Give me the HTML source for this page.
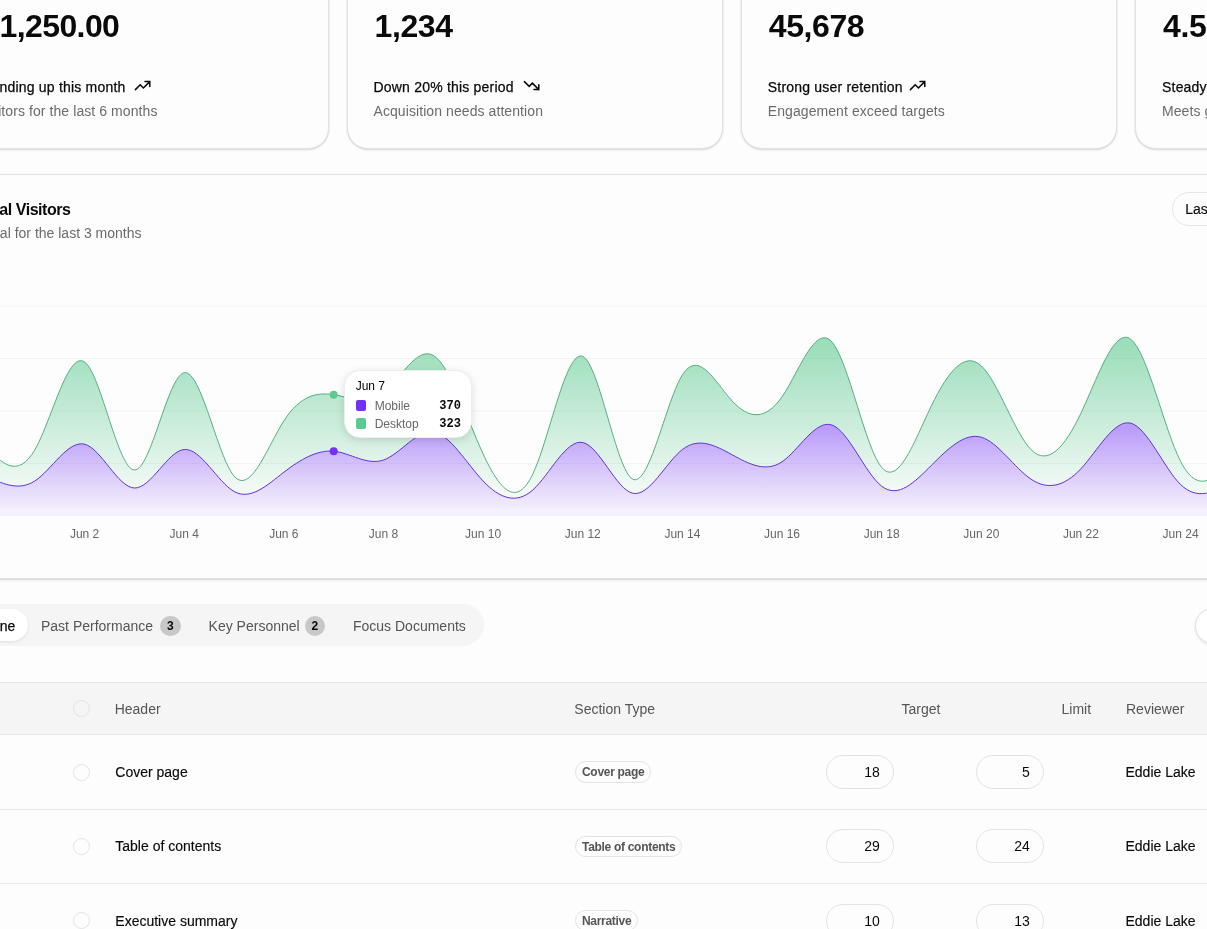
<!DOCTYPE html>
<html><head><meta charset="utf-8"><style>
*{box-sizing:border-box;margin:0;padding:0}
html,body{width:1207px;will-change:transform;height:929px;overflow:hidden;background:#fdfdfd;font-family:"Liberation Sans",sans-serif;color:#0a0a0a;position:relative}
body>div,body>i,body>svg{position:absolute;white-space:nowrap}
.card{top:-60px;width:376.5px;height:208.7px;border:1px solid #e2e2e6;border-radius:21px;background:#fdfdfd;box-shadow:0 1px 2px rgba(0,0,0,.15),0 0 2px rgba(0,0,0,.04)}
.num{top:8.1px;font-size:32px;font-weight:700;line-height:36px;letter-spacing:-.4px}
.l1{top:79px;font-size:14px;line-height:16px;letter-spacing:.2px;-webkit-text-stroke:.25px #0a0a0a}
.l2{top:102.8px;font-size:14px;line-height:16px;color:#6b6b6b;letter-spacing:.08px}
.ic{position:absolute}
.chartcard{left:-200px;top:174px;width:1600px;height:405px;border:1px solid #e2e2e6;border-radius:21px;background:#fdfdfd;box-shadow:0 1px 2px rgba(0,0,0,.15),0 0 2px rgba(0,0,0,.04)}
.ct{top:201.2px;font-size:16px;font-weight:700;line-height:18px;letter-spacing:-.45px}
.cd{top:225px;font-size:14px;line-height:16px;color:#6b6b6b}
.btn3{left:1172.3px;top:192.3px;width:140px;height:33.5px;border:1px solid #e6e6e6;border-radius:17px;background:#fdfdfd;font-size:14px;line-height:16px;padding:8px 0 0 12px;-webkit-text-stroke:.15px #0a0a0a}
.xl{top:527px;width:80px;text-align:center;font-size:12px;line-height:14px;color:#666}
.tip{left:343.7px;top:369.9px;width:128.2px;height:68.4px;background:#fff;border:1px solid #ededed;border-radius:16px;box-shadow:0 2px 8px rgba(0,0,0,.13)}
.tip div,.tip i{position:absolute}
.tip .t{left:11px;top:8px;font-size:12px;font-weight:400;line-height:14px;color:#000}
.tip .sw{left:11px;width:10px;height:10.5px;border-radius:2px}
.tip .nm{left:30px;font-size:12px;line-height:14px;color:#666}
.tip .vl{right:10px;font-family:"Liberation Mono",monospace;font-size:12px;line-height:14px;font-weight:700}
.tabs{left:-60px;top:603.8px;width:544px;height:42.3px;border-radius:21px;background:#f5f5f5}
.tabact{left:-60px;top:609.1px;width:88px;height:32.3px;border-radius:16px;background:#fff;box-shadow:0 1px 3px rgba(0,0,0,.1)}
.tabact span{position:absolute;right:12.8px;top:9px;font-size:14px;line-height:16px;color:#0a0a0a;-webkit-text-stroke:.25px #0a0a0a}
.tab{top:618px;font-size:14px;line-height:16px;color:#555}
.cnt{top:616px;width:20.7px;height:19.7px;border-radius:10px;background:#c8c8c8;font-size:12px;line-height:20px;text-align:center;color:#0a0a0a;font-weight:700}
.rbtn{left:1195px;top:607.8px;width:60px;height:35.8px;border-radius:18px;background:#fff;border:1px solid #e2e2e2;box-shadow:0 1px 3px rgba(0,0,0,.1)}
.thead{left:0;top:682px;width:1207px;height:53px;background:#f5f5f5;border-top:1px solid #e4e4e9;border-bottom:1px solid #e4e4e9}
.th{top:701px;font-size:14px;line-height:16px;color:#555}
.chk{left:72.9px;width:17px;height:17px;border-radius:9px;border:1px solid #e3e3e6}
.hl{left:0;width:1207px;height:1px;background:#e6e6eb}
.cell{font-size:14px;line-height:16px;-webkit-text-stroke:.15px #0a0a0a}
.badge{left:574.5px;height:21.5px;border:1px solid #e3e3e3;border-radius:11px;padding:1px 6px 0 6.5px;font-size:12px;line-height:19px;font-weight:700;color:#555;letter-spacing:-.3px}
.inp{width:68px;height:34px;border:1px solid #e3e3e3;border-radius:17px;font-size:14px;line-height:32px;text-align:right;padding-right:12.8px}
.r{text-align:right}
</style></head><body>
<div class="card" style="left:-47.75px"></div>
<div class="num r" style="right:1087.7px;letter-spacing:-.6px">$1,250.00</div><div class="l1 r" style="right:1081.5px">Trending up this month</div><div class="l2 r" style="right:1049.5px">Visitors for the last 6 months</div><svg class="ic" style="left:132.6px;top:75.50000000000001px" width="19.2" height="19.2" viewBox="0 0 24 24" fill="none" stroke="#0a0a0a" stroke-width="1.9" stroke-linecap="round" stroke-linejoin="miter"><path d="M3 17l6-6 4 4 8-8M15 7h6v6"/></svg>
<div class="card" style="left:346.5px"></div>
<div class="num" style="left:374.5px">1,234</div><div class="l1" style="left:373.5px">Down 20% this period</div><div class="l2" style="left:373.5px">Acquisition needs attention</div><svg class="ic" style="left:521.6px;top:75.50000000000001px" width="19.2" height="19.2" viewBox="0 0 24 24" fill="none" stroke="#0a0a0a" stroke-width="1.9" stroke-linecap="round" stroke-linejoin="miter"><path d="M3 7l6 6 4-4 8 8M21 11v6h-6"/></svg>
<div class="card" style="left:740.75px"></div>
<div class="num" style="left:768.75px">45,678</div><div class="l1" style="left:767.75px">Strong user retention</div><div class="l2" style="left:767.75px">Engagement exceed targets</div><svg class="ic" style="left:907.6px;top:75.50000000000001px" width="19.2" height="19.2" viewBox="0 0 24 24" fill="none" stroke="#0a0a0a" stroke-width="1.9" stroke-linecap="round" stroke-linejoin="miter"><path d="M3 17l6-6 4 4 8-8M15 7h6v6"/></svg>
<div class="card" style="left:1135.0px"></div>
<div class="num" style="left:1163.0px">4.5%</div><div class="l1" style="left:1162.0px">Steady performance increase</div><div class="l2" style="left:1162.0px">Meets growth projections</div><svg class="ic" style="left:1397.6px;top:75.50000000000001px" width="19.2" height="19.2" viewBox="0 0 24 24" fill="none" stroke="#0a0a0a" stroke-width="1.9" stroke-linecap="round" stroke-linejoin="miter"><path d="M3 17l6-6 4 4 8-8M15 7h6v6"/></svg>

<div class="chartcard"></div>
<div class="ct r" style="right:1136.5px">Total Visitors</div>
<div class="cd r" style="right:1065.5px">Total for the last 3 months</div>
<div class="btn3">Last 3 months</div>
<svg class="chart" style="left:0;top:0" width="1207" height="929">
<defs>
<linearGradient id="gd" gradientUnits="userSpaceOnUse" x1="0" y1="337.3" x2="0" y2="500.2">
<stop offset="5%" stop-color="#5cc98f" stop-opacity="1"/><stop offset="95%" stop-color="#5cc98f" stop-opacity=".1"/></linearGradient>
<linearGradient id="gm" gradientUnits="userSpaceOnUse" x1="0" y1="422.8" x2="0" y2="516">
<stop offset="5%" stop-color="#7132f5" stop-opacity=".8"/><stop offset="95%" stop-color="#7132f5" stop-opacity=".1"/></linearGradient>
</defs>
<g stroke="#f3f3f3" stroke-width="1">
<line x1="0" x2="1207" y1="306" y2="306"/><line x1="0" x2="1207" y1="358.5" y2="358.5"/><line x1="0" x2="1207" y1="411" y2="411"/><line x1="0" x2="1207" y1="463.5" y2="463.5"/>
</g>
<path d="M-164.5,482.8C-147.9,499.6,-131.3,500.3,-114.6,493.2C-98,486.2,-81.4,471.4,-64.8,467C-48.2,462.6,-31.6,468.4,-15,475.8C1.6,483.1,18.2,491.8,34.8,481C51.4,470.2,68,440,84.6,444.2C101.2,448.5,117.8,487.4,134.4,488C151,488.6,167.6,451.1,184.2,449.5C200.9,447.9,217.5,482.2,234.1,491.5C250.7,500.8,267.3,485,283.9,472.2C300.5,459.5,317.1,449.7,333.7,451.2C350.3,452.8,366.9,465.8,383.5,460C400.1,454.2,416.7,429.7,433.3,432C449.9,434.3,466.5,463.4,483.1,481C499.7,498.6,516.4,504.7,533,489.8C549.6,474.8,566.2,438.9,582.8,442.5C599.4,446.1,616,489.2,632.6,493.2C649.2,497.3,665.8,462.4,682.4,449.5C699,436.6,715.6,445.7,732.2,454.8C748.8,463.8,765.4,472.9,782,461.8C798.6,450.6,815.3,419.3,831.9,425C848.5,430.7,865.1,473.4,881.7,486.2C898.3,499.1,914.9,481.9,931.5,465.2C948.1,448.6,964.7,432.4,981.3,437.2C997.9,442.1,1014.5,468.1,1031.1,479.2C1047.7,490.4,1064.3,486.6,1080.9,468.8C1097.5,450.9,1114.1,418.9,1130.8,423.2C1147.4,427.6,1164,468.3,1180.6,484.5C1197.2,500.7,1213.8,492.4,1230.4,482.8C1247,473.1,1263.6,462,1280.2,449.5C1296.8,437,1313.4,422.9,1330,430.2L1330,516L-164.5,516Z" fill="url(#gm)" fill-opacity=".6" stroke="none"/>
<path d="M-164.5,442C-147.9,476.4,-131.3,494.3,-114.6,479.6C-98,464.9,-81.4,417.7,-64.8,407.5C-48.2,397.3,-31.6,424.3,-15,444.6C1.6,464.9,18.2,478.6,34.8,449.9C51.4,421.1,68,349.9,84.6,362C101.2,374.1,117.8,469.5,134.4,470C151,470.5,167.6,376.1,184.2,372.7C200.9,369.2,217.5,456.8,234.1,476.1C250.7,495.4,267.3,446.6,283.9,420.8C300.5,395,317.1,392.1,333.7,394.7C350.3,397.4,366.9,405.5,383.5,392.6C400.1,379.7,416.7,345.8,433.3,355.4C449.9,364.9,466.5,417.8,483.1,453.9C499.7,489.9,516.4,509,533,473.6C549.6,438.3,566.2,348.5,582.8,356.4C599.4,364.3,616,469.8,632.6,479.1C649.2,488.3,665.8,401.3,682.4,374.9C699,348.6,715.6,383,732.2,401C748.8,419.1,765.4,420.8,782,396.8C798.6,372.8,815.3,323.2,831.9,341.9C848.5,360.6,865.1,447.7,881.7,467.5C898.3,487.3,914.9,439.8,931.5,405.6C948.1,371.4,964.7,350.5,981.3,365.9C997.9,381.2,1014.5,432.9,1031.1,449.7C1047.7,466.4,1064.3,448.2,1080.9,413.3C1097.5,378.3,1114.1,326.6,1130.8,339.2C1147.4,351.9,1164,428.9,1180.6,461.4C1197.2,493.9,1213.8,481.8,1230.4,458.1C1247,434.4,1263.6,399,1280.2,373.6C1296.8,348.1,1313.4,332.5,1330,351.9L1330,430.2C1313.4,422.9,1296.8,437,1280.2,449.5C1263.6,462,1247,473.1,1230.4,482.8C1213.8,492.4,1197.2,500.7,1180.6,484.5C1164,468.3,1147.4,427.6,1130.8,423.2C1114.1,418.9,1097.5,450.9,1080.9,468.8C1064.3,486.6,1047.7,490.4,1031.1,479.2C1014.5,468.1,997.9,442.1,981.3,437.2C964.7,432.4,948.1,448.6,931.5,465.2C914.9,481.9,898.3,499.1,881.7,486.2C865.1,473.4,848.5,430.7,831.9,425C815.3,419.3,798.6,450.6,782,461.8C765.4,472.9,748.8,463.8,732.2,454.8C715.6,445.7,699,436.6,682.4,449.5C665.8,462.4,649.2,497.3,632.6,493.2C616,489.2,599.4,446.1,582.8,442.5C566.2,438.9,549.6,474.8,533,489.8C516.4,504.7,499.7,498.6,483.1,481C466.5,463.4,449.9,434.3,433.3,432C416.7,429.7,400.1,454.2,383.5,460C366.9,465.8,350.3,452.8,333.7,451.2C317.1,449.7,300.5,459.5,283.9,472.2C267.3,485,250.7,500.8,234.1,491.5C217.5,482.2,200.9,447.9,184.2,449.5C167.6,451.1,151,488.6,134.4,488C117.8,487.4,101.2,448.5,84.6,444.2C68,440,51.4,470.2,34.8,481C18.2,491.8,1.6,483.1,-15,475.8C-31.6,468.4,-48.2,462.6,-64.8,467C-81.4,471.4,-98,486.2,-114.6,493.2C-131.3,500.3,-147.9,499.6,-164.5,482.8Z" fill="url(#gd)" fill-opacity=".6" stroke="none"/>
<path d="M-164.5,482.8C-147.9,499.6,-131.3,500.3,-114.6,493.2C-98,486.2,-81.4,471.4,-64.8,467C-48.2,462.6,-31.6,468.4,-15,475.8C1.6,483.1,18.2,491.8,34.8,481C51.4,470.2,68,440,84.6,444.2C101.2,448.5,117.8,487.4,134.4,488C151,488.6,167.6,451.1,184.2,449.5C200.9,447.9,217.5,482.2,234.1,491.5C250.7,500.8,267.3,485,283.9,472.2C300.5,459.5,317.1,449.7,333.7,451.2C350.3,452.8,366.9,465.8,383.5,460C400.1,454.2,416.7,429.7,433.3,432C449.9,434.3,466.5,463.4,483.1,481C499.7,498.6,516.4,504.7,533,489.8C549.6,474.8,566.2,438.9,582.8,442.5C599.4,446.1,616,489.2,632.6,493.2C649.2,497.3,665.8,462.4,682.4,449.5C699,436.6,715.6,445.7,732.2,454.8C748.8,463.8,765.4,472.9,782,461.8C798.6,450.6,815.3,419.3,831.9,425C848.5,430.7,865.1,473.4,881.7,486.2C898.3,499.1,914.9,481.9,931.5,465.2C948.1,448.6,964.7,432.4,981.3,437.2C997.9,442.1,1014.5,468.1,1031.1,479.2C1047.7,490.4,1064.3,486.6,1080.9,468.8C1097.5,450.9,1114.1,418.9,1130.8,423.2C1147.4,427.6,1164,468.3,1180.6,484.5C1197.2,500.7,1213.8,492.4,1230.4,482.8C1247,473.1,1263.6,462,1280.2,449.5C1296.8,437,1313.4,422.9,1330,430.2" fill="none" stroke="#6131d6" stroke-width="1"/>
<path d="M-164.5,442C-147.9,476.4,-131.3,494.3,-114.6,479.6C-98,464.9,-81.4,417.7,-64.8,407.5C-48.2,397.3,-31.6,424.3,-15,444.6C1.6,464.9,18.2,478.6,34.8,449.9C51.4,421.1,68,349.9,84.6,362C101.2,374.1,117.8,469.5,134.4,470C151,470.5,167.6,376.1,184.2,372.7C200.9,369.2,217.5,456.8,234.1,476.1C250.7,495.4,267.3,446.6,283.9,420.8C300.5,395,317.1,392.1,333.7,394.7C350.3,397.4,366.9,405.5,383.5,392.6C400.1,379.7,416.7,345.8,433.3,355.4C449.9,364.9,466.5,417.8,483.1,453.9C499.7,489.9,516.4,509,533,473.6C549.6,438.3,566.2,348.5,582.8,356.4C599.4,364.3,616,469.8,632.6,479.1C649.2,488.3,665.8,401.3,682.4,374.9C699,348.6,715.6,383,732.2,401C748.8,419.1,765.4,420.8,782,396.8C798.6,372.8,815.3,323.2,831.9,341.9C848.5,360.6,865.1,447.7,881.7,467.5C898.3,487.3,914.9,439.8,931.5,405.6C948.1,371.4,964.7,350.5,981.3,365.9C997.9,381.2,1014.5,432.9,1031.1,449.7C1047.7,466.4,1064.3,448.2,1080.9,413.3C1097.5,378.3,1114.1,326.6,1130.8,339.2C1147.4,351.9,1164,428.9,1180.6,461.4C1197.2,493.9,1213.8,481.8,1230.4,458.1C1247,434.4,1263.6,399,1280.2,373.6C1296.8,348.1,1313.4,332.5,1330,351.9" fill="none" stroke="#53b07f" stroke-width="1"/>
<circle cx="333.7" cy="451.2" r="4" fill="#7132f5"/>
<circle cx="333.7" cy="394.7" r="4" fill="#5cc98f"/>
</svg>
<div class="xl" style="left:44.62px">Jun 2</div><div class="xl" style="left:144.25px">Jun 4</div><div class="xl" style="left:243.88px">Jun 6</div><div class="xl" style="left:343.51px">Jun 8</div><div class="xl" style="left:443.14px">Jun 10</div><div class="xl" style="left:542.78px">Jun 12</div><div class="xl" style="left:642.41px">Jun 14</div><div class="xl" style="left:742.04px">Jun 16</div><div class="xl" style="left:841.67px">Jun 18</div><div class="xl" style="left:941.30px">Jun 20</div><div class="xl" style="left:1040.94px">Jun 22</div><div class="xl" style="left:1140.57px">Jun 24</div>
<div class="tip">
 <div class="t">Jun 7</div>
 <i class="sw" style="top:29.6px;background:#7132f5"></i><div class="nm" style="top:28.5px">Mobile</div><div class="vl" style="top:28.5px">370</div>
 <i class="sw" style="top:47.6px;background:#5cc98f"></i><div class="nm" style="top:46.5px">Desktop</div><div class="vl" style="top:46.5px">323</div>
</div>
<div class="tabs"></div>
<div class="tabact"><span>Outline</span></div>
<div class="tab" style="left:41px">Past Performance</div><div class="cnt" style="left:160px">3</div>
<div class="tab" style="left:208.6px">Key Personnel</div><div class="cnt" style="left:304.5px">2</div>
<div class="tab" style="left:353px">Focus Documents</div>
<div class="rbtn"></div>
<div class="thead"></div>
<i class="chk" style="top:699.7px"></i>
<div class="th" style="left:114.7px">Header</div>
<div class="th" style="left:574.3px">Section Type</div>
<div class="th" style="left:901.5px">Target</div>
<div class="th" style="left:1061.5px">Limit</div>
<div class="th" style="left:1126px">Reviewer</div>
<i class="chk" style="top:763.5px"></i><div class="cell" style="left:115.3px;top:764.0px">Cover page</div><div class="badge" style="top:761.3px">Cover page</div><div class="inp" style="left:825.5px;top:755.0px">18</div><div class="inp" style="left:975.5px;top:755.0px">5</div><div class="cell" style="left:1125.5px;top:764.0px">Eddie Lake</div><div class="hl" style="top:809.0px"></div>
<i class="chk" style="top:837.8px"></i><div class="cell" style="left:115.3px;top:838.3px">Table of contents</div><div class="badge" style="top:835.6px">Table of contents</div><div class="inp" style="left:825.5px;top:829.3px">29</div><div class="inp" style="left:975.5px;top:829.3px">24</div><div class="cell" style="left:1125.5px;top:838.3px">Eddie Lake</div><div class="hl" style="top:883.3px"></div>
<i class="chk" style="top:912.1px"></i><div class="cell" style="left:115.3px;top:912.6px">Executive summary</div><div class="badge" style="top:909.9px">Narrative</div><div class="inp" style="left:825.5px;top:903.6px">10</div><div class="inp" style="left:975.5px;top:903.6px">13</div><div class="cell" style="left:1125.5px;top:912.6px">Eddie Lake</div>

</body></html>
